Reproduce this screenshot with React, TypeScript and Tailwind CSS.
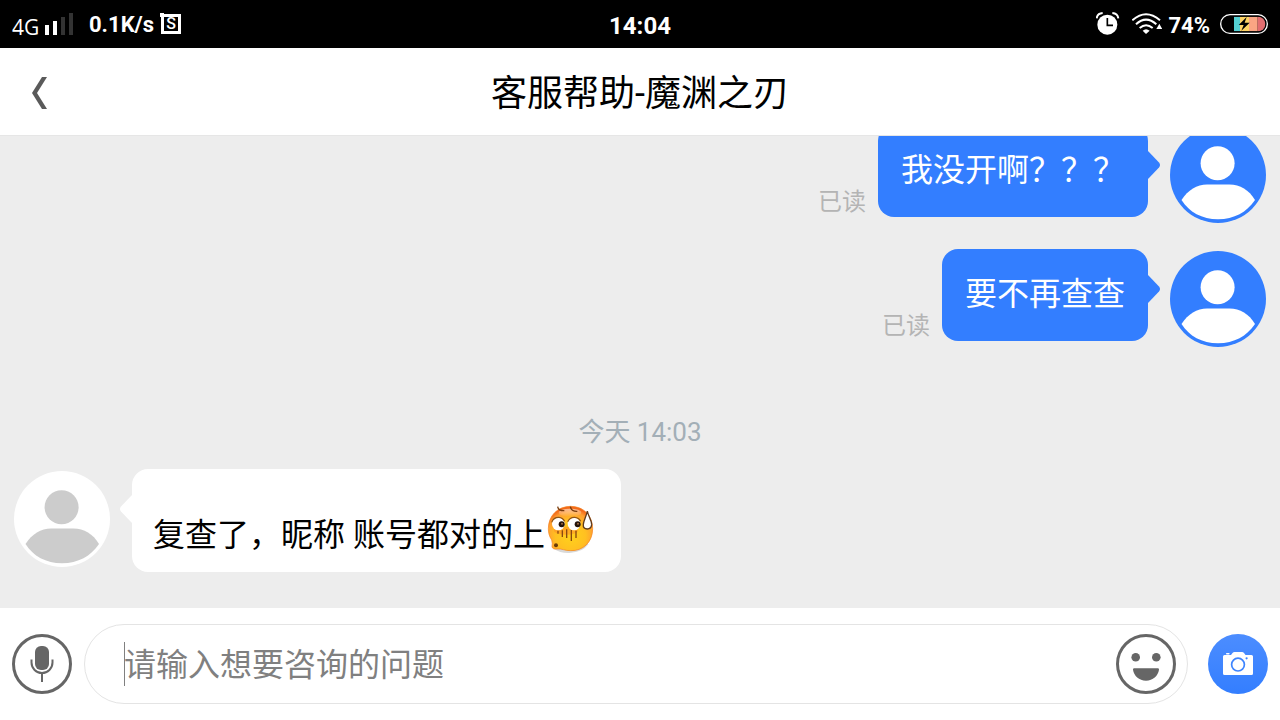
import React, { useState } from 'react';

type Message = {
  id: number;
  text: string;
  read?: boolean;
};

const sent: Message[] = [
  { id: 1, text: '我没开啊？？？', read: true },
  { id: 2, text: '要不再查查', read: true },
];

function SignalIcon() {
  return (
    <svg width="28" height="22" viewBox="0 0 28 22" aria-hidden="true">
      <rect x="0" y="12" width="4" height="10" fill="#fff" />
      <rect x="8" y="8" width="4" height="14" fill="#fff" />
      <rect x="16" y="4" width="4" height="18" fill="#333" />
      <rect x="24" y="0" width="4" height="22" fill="#333" />
    </svg>
  );
}

function AlarmIcon() {
  return (
    <svg width="24" height="24" viewBox="0 0 72 72" aria-hidden="true">
      <circle cx="34" cy="38" r="30" fill="#fff" />
      <path d="M2 19Q4 4 20 3M49 3Q65 4 67 19" fill="none" stroke="#fff" strokeWidth="6" />
      <path d="M34 18v22h17" fill="none" stroke="#000" strokeWidth="5" />
    </svg>
  );
}

function WifiIcon() {
  return (
    <svg width="30" height="22" viewBox="0 0 90 66" aria-hidden="true">
      <g fill="none" stroke="#fff" strokeWidth="6">
        <path d="M1 22Q42 -14 84 22" />
        <path d="M12 34Q42 6 73 34" />
        <path d="M23 45Q42 28 62 45" />
      </g>
      <path d="M32 53Q42 44 53 53L42 63z" fill="#fff" />
      <path d="M82 32l9 16H73z" fill="#fff" />
    </svg>
  );
}

function BatteryIcon() {
  return (
    <svg width="48" height="20" viewBox="0 0 144 60" aria-hidden="true">
      <defs>
        <clipPath id="battery-fill">
          <rect x="7" y="8" width="129" height="44" rx="22" />
        </clipPath>
      </defs>
      <rect x="2" y="2" width="140" height="56" rx="28" fill="#000" stroke="#fff" strokeWidth="4" />
      <g clipPath="url(#battery-fill)">
        <rect x="42" y="8" width="18" height="44" fill="#54d0d2" />
        <rect x="60" y="8" width="27" height="44" fill="#fdd365" />
        <rect x="87" y="8" width="26" height="44" fill="#faa583" />
        <rect x="113" y="8" width="24" height="44" fill="#e36e70" />
      </g>
      <path d="M80 9L56 33h15l-7 17 25-24H74z" fill="#000" />
    </svg>
  );
}

function Avatar({ background, color }: { background: string; color: string }) {
  return (
    <svg className="mt-0.5 shrink-0" width="96" height="96" viewBox="0 0 96 96" aria-hidden="true">
      <circle cx="48" cy="48" r="48" fill={background} />
      <circle cx="47.6" cy="36.2" r="17" fill={color} />
      <path d="M11.5 73C18 63 27 57.5 37 57.5H59.5C70 57.5 79 63 85 73C77 85 64 92.3 48 92.3S19 85 11.5 73z" fill={color} />
    </svg>
  );
}

function SweatFace() {
  return (
    <svg className="-mt-3 ml-px shrink-0" width="50" height="50" viewBox="48 312 150 150" role="img" aria-label="尴尬">
      <defs>
        <radialGradient id="face" cx="0.5" cy="0.66" r="0.62">
          <stop offset="0" stopColor="#ffd21c" />
          <stop offset="0.55" stopColor="#ffc021" />
          <stop offset="0.85" stopColor="#ff9f30" />
          <stop offset="1" stopColor="#f2691a" />
        </radialGradient>
        <linearGradient id="shine" x1="0" y1="0" x2="0" y2="1">
          <stop offset="0" stopColor="#fff" stopOpacity="0.55" />
          <stop offset="1" stopColor="#fff" stopOpacity="0" />
        </linearGradient>
      </defs>
      <path d="M70 446Q96 462 124 458Q158 456 176 432L120 430z" fill="#000" opacity="0.15" />
      <path d="M122 319C162 319 188 348 188 386C188 426 160 453 122 452C104 452 96 446 84 447Q67 449 66 440Q68 430 65 420C58 409 55 399 55 386C55 348 82 319 122 319z" fill="url(#face)" stroke="#f58220" strokeWidth="2" />
      <ellipse cx="120" cy="338" rx="34" ry="12" fill="url(#shine)" />
      <ellipse cx="108" cy="392" rx="36" ry="12" fill="#ff7a2a" opacity="0.4" />
      <circle cx="85" cy="372" r="19" fill="#fff" />
      <circle cx="132" cy="372" r="19" fill="#fff" />
      <path d="M65 367Q71 351 87 352Q98 353 104 364M113 365Q120 351 134 352Q147 353 152 364" fill="none" stroke="#8f5418" strokeWidth="3.5" />
      <circle cx="95" cy="373" r="9" fill="#24130a" />
      <circle cx="143" cy="373" r="9" fill="#24130a" />
      <circle cx="96" cy="371" r="3" fill="#a06b42" />
      <circle cx="144" cy="371" r="3" fill="#a06b42" />
      <path d="M83 320Q85 333 103 332M121 320Q124 335 142 334" fill="none" stroke="#7a3d0c" strokeWidth="4" />
      <path d="M84 392v9M97 391v20M110 388v26M124 390v33M138 392v22" stroke="#8a4a10" strokeWidth="4" />
      <circle cx="78" cy="436" r="6" fill="#6b3a08" />
      <path d="M172 333C175 350 186 362 185 374C184 383 180 387 172 387C163 387 159 382 160 373C161 361 169 350 172 333z" fill="#fff" stroke="#5f3b1c" strokeWidth="4" />
    </svg>
  );
}

function StatusBar() {
  return (
    <div className="grid h-12 shrink-0 grid-cols-[1fr_auto_1fr] items-center bg-black px-3 text-white">
      <div className="flex items-center">
        <span className="w-[33px] pt-1.5 font-['Open_Sans'] text-[21px] leading-6">4G</span>
        <SignalIcon />
        <span className="ml-4 pt-0.5 text-[22px] leading-6 font-bold">0.1K/s</span>
        <span className="relative ml-[7px] flex h-5 w-5 items-center justify-center border-3 border-white text-base leading-4 font-medium">
          S
          <span className="absolute -top-1 -left-1 h-1 w-1 bg-white" />
        </span>
      </div>
      <span className="pt-1 text-2xl leading-6 font-bold">14:04</span>
      <div className="flex items-center justify-end">
        <AlarmIcon />
        <span className="ml-3">
          <WifiIcon />
        </span>
        <span className="mr-2.5 ml-1.5 pt-1 text-[22px] leading-6 font-bold">74%</span>
        <BatteryIcon />
      </div>
    </div>
  );
}

function SentMessage({ message }: { message: Message }) {
  return (
    <div className="flex items-start justify-end pr-3.5">
      <div className="flex items-end gap-3">
        {message.read && <span className="text-2xl leading-[30px] text-[#b4b4b4]">已读</span>}
        <p className="relative mr-[22px] rounded-2xl bg-[#337eff] px-[23px] pt-[21px] pb-[23px] text-[32px] leading-[48px] text-white">
          {message.text}
          <svg className="absolute top-[26px] left-full" width="12" height="28" viewBox="0 0 12 28" aria-hidden="true">
            <path d="M0 0L11 11.5Q13 14 11 16.5L0 28z" fill="#337eff" />
          </svg>
        </p>
      </div>
      <Avatar background="#337eff" color="#fff" />
    </div>
  );
}

export default function App() {
  const [draft, setDraft] = useState('');

  return (
    <div lang="zh-CN" className="flex h-screen flex-col bg-white font-[Roboto,'Noto_Sans_CJK_SC',sans-serif]">
      <StatusBar />

      <header className="grid h-22 shrink-0 grid-cols-[1fr_auto_1fr] items-center border-b border-[#e6e6e6] px-8">
        <button type="button" aria-label="返回" className="w-4 pt-0.5">
          <svg width="16" height="32" viewBox="0 0 16 32" aria-hidden="true">
            <path d="M10 0h5L5 16l10 16h-5L0 16z" fill="#5a5a5a" />
          </svg>
        </button>
        <h1 className="pt-1 text-4xl leading-12 text-black">客服帮助-魔渊之刃</h1>
      </header>

      <main className="flex min-h-0 flex-1 flex-col justify-end overflow-hidden bg-[#ededed] pb-9">
        <div className="flex flex-col gap-[26px]">
          {sent.map((m) => (
            <SentMessage key={m.id} message={m} />
          ))}
        </div>

        <p className="mt-[65px] mb-[17px] text-center text-[26px] leading-10 text-[#a3afb7]">今天 14:03</p>

        <div className="flex items-start pl-3.5">
          <Avatar background="#fff" color="#ccc" />
          <div className="relative ml-[22px] flex items-center rounded-2xl bg-white pt-[42px] pr-[25px] pb-[13px] pl-[21px]">
            <svg className="absolute top-[26px] right-full" width="12" height="28" viewBox="0 0 12 28" aria-hidden="true">
              <path d="M12 0L1 11.5Q-1 14 1 16.5L12 28z" fill="#fff" />
            </svg>
            <p className="text-[32px] leading-[48px] text-black">复查了，昵称 账号都对的上</p>
            <SweatFace />
          </div>
        </div>
      </main>

      <footer className="flex h-28 shrink-0 items-center px-3">
        <button type="button" aria-label="语音" className="shrink-0">
          <svg width="60" height="60" viewBox="0 0 60 60" fill="none" stroke="#666" aria-hidden="true">
            <circle cx="30" cy="30" r="28.5" strokeWidth="3" />
            <rect x="23" y="12" width="14" height="24" rx="6" fill="#666" stroke="none" />
            <path d="M19.5 25.5v3a10.5 10.5 0 0 0 21 0v-3M30 39v9" strokeWidth="2" />
          </svg>
        </button>
        <div className="ml-3 flex h-20 flex-1 items-center rounded-full border border-[#e4e4e4] pr-[11px] pl-[39px]">
          <span className="-mr-px h-11 w-px bg-[#808080]" />
          <input
            type="text"
            aria-label="消息"
            value={draft}
            onChange={(e) => setDraft(e.target.value)}
            placeholder="请输入想要咨询的问题"
            className="h-12 min-w-0 flex-1 pt-0.5 text-[32px] text-black outline-none placeholder:text-[#808080]"
          />
          <button type="button" aria-label="表情" className="shrink-0">
            <svg width="60" height="60" viewBox="0 0 60 60" fill="#666" aria-hidden="true">
              <circle cx="30" cy="30" r="28.5" fill="none" stroke="#666" strokeWidth="3" />
              <circle cx="19.7" cy="23.2" r="4.3" />
              <circle cx="40.3" cy="23.2" r="4.3" />
              <path d="M18 34.3h24q1.3 0 1 1.5C42 42 37 46.7 30 46.7S18 42 17 35.8q-.3-1.5 1-1.5z" />
            </svg>
          </button>
        </div>
        <button type="button" aria-label="拍照" className="ml-5 shrink-0 rounded-full bg-linear-to-b from-[#4c8dff] to-[#337eff]">
          <svg width="60" height="60" viewBox="0 0 60 60" fill="#fff" aria-hidden="true">
            <path d="M16.5 21h6.5l1.5-2q.8-1 2-1h7.5q1.2 0 2 1l1.5 2h6q1.5 0 1.5 1.5v17q0 1.5-1.5 1.5h-27q-1.5 0-1.5-1.5v-17q0-1.5 1.5-1.5z" />
            <rect x="18" y="19" width="3.6" height="1.5" rx="0.7" />
            <circle cx="30" cy="30.6" r="6.4" stroke="#3d84ff" strokeWidth="1.7" />
            <circle cx="38.6" cy="24.3" r="1.1" fill="#3d84ff" />
          </svg>
        </button>
      </footer>
    </div>
  );
}
